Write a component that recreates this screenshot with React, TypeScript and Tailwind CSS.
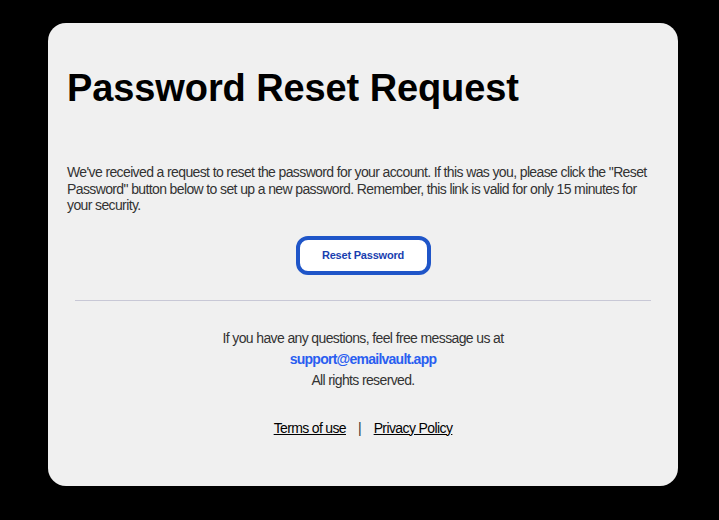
export default function App() {
  return (
    <div className="w-[719px] h-[520px] bg-black flex pt-[23px] pl-[48px]" style={{ fontFamily: '"Liberation Sans", Arial, sans-serif' }}>
      <div className="w-[630px] h-[463px] bg-[#f0f0f0] rounded-[18px] px-[19px] flex flex-col">
        <h1 className="mt-[42px] text-[38px] leading-[46px] font-bold text-black tracking-[-0.1px]">Password Reset Request</h1>
        <p className="mt-[53px] text-[14px] leading-[16.5px] text-[#333333] tracking-[-0.62px]">
          We've received a request to reset the password for your account. If this was you, please click the "Reset Password" button below to set up a new password. Remember, this link is valid for only 15 minutes for your security.
        </p>
        <div className="flex justify-center mt-[22px]">
          <button className="w-[135px] h-[39px] bg-white border-[4px] border-[#1f55c8] rounded-[12px] text-[11px] font-bold text-[#1a3fb0] tracking-[-0.2px]">
            Reset Password
          </button>
        </div>
        <div className="mx-[8px] mt-[25px] h-px bg-[#c8c8d6]" />
        <div className="mt-[28px] flex flex-col items-center text-[14px] text-[#333333]">
          <div className="leading-[18px] tracking-[-0.62px]">If you have any questions, feel free message us at</div>
          <div className="mt-[3px] leading-[18px] font-bold text-[#2a5ef0] tracking-[-0.75px]">support@emailvault.app</div>
          <div className="mt-[3px] leading-[18px] tracking-[-0.64px]">All rights reserved.</div>
          <div className="mt-[29px] flex items-center gap-[12px] text-black">
            <span className="underline tracking-[-0.65px]">Terms of use</span>
            <span className="text-[#333333]">|</span>
            <span className="underline tracking-[-0.6px]">Privacy Policy</span>
          </div>
        </div>
      </div>
    </div>
  );
}
